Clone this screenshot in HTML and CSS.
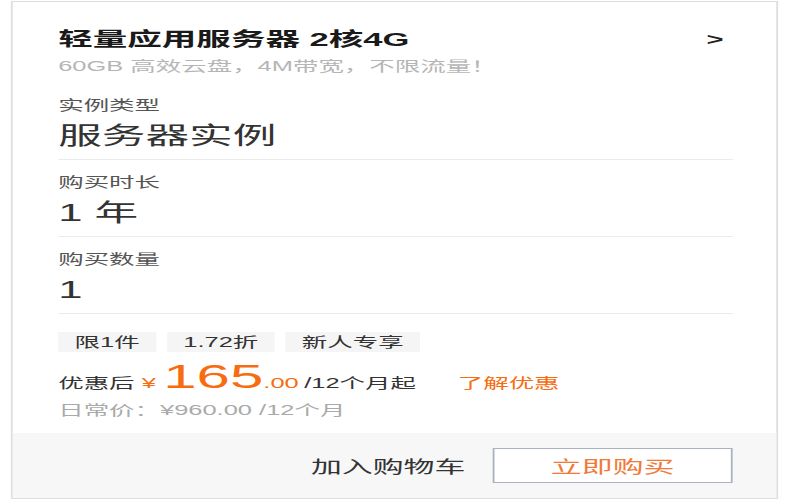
FILE: index.html
```html
<!DOCTYPE html>
<html lang="zh-CN">
<head>
<meta charset="utf-8">
<title>轻量应用服务器</title>
<link rel="stylesheet" href="styles.css">
</head>
<body>
<div class="stage">
  <div class="card">
    <div class="body">
      <div class="head">
        <div class="title-row">
          <h1 class="title">轻量应用服务器 2核4G</h1>
          <span class="arrow">&gt;</span>
        </div>
        <p class="subtitle">60GB 高效云盘，4M带宽，不限流量！</p>
      </div>
      <div class="fields">
        <div class="field">
          <div class="label">实例类型</div>
          <div class="value">服务器实例</div>
        </div>
        <div class="field">
          <div class="label">购买时长</div>
          <div class="value">1 年</div>
        </div>
        <div class="field">
          <div class="label">购买数量</div>
          <div class="value">1</div>
        </div>
      </div>
      <div class="tags">
        <span class="tag">限1件</span>
        <span class="tag">1.72折</span>
        <span class="tag">新人专享</span>
      </div>
      <div class="price">
        <span class="price-label">优惠后</span><span class="yen">¥</span><span class="amount">165</span><span class="cents">.00</span><span class="period">/12个月起</span><span class="learn">了解优惠</span>
      </div>
      <div class="regular">日常价：¥960.00 /12个月</div>
    </div>
    <div class="footer">
      <span class="cart">加入购物车</span>
      <button class="buy">立即购买</button>
    </div>
  </div>
</div>
</body>
</html>
```
FILE: styles.css
```css
* {
  box-sizing: border-box;
  margin: 0;
  padding: 0;
}

body {
  margin: 0;
  background: #ffffff;
  font-family: "Liberation Sans", "Noto Sans CJK SC", sans-serif;
  color: #333333;
}

.stage {
  width: 440px;
  height: 500px;
  padding: 1px 0 0 6px;
  transform: scaleX(1.818);
  transform-origin: 0 0;
}

.card {
  width: 422px;
  height: 498px;
  border: 1px solid #dedede;
  background: #ffffff;
  display: flex;
  flex-direction: column;
}

.body {
  flex: 1;
  padding: 25px 24px 0 25px;
}

.title-row {
  display: flex;
  justify-content: space-between;
  align-items: center;
}

.title {
  font-size: 19px;
  line-height: 26px;
  font-weight: bold;
  color: #1a1a1a;
}

.arrow {
  font-size: 16px;
  font-weight: bold;
  color: #222222;
  margin-right: 5px;
}

.subtitle {
  margin-top: 3px;
  font-size: 14px;
  line-height: 20px;
  color: #b5b5b5;
}

.fields {
  margin-top: 7px;
}

.field {
  padding: 12px 0 8px;
  border-bottom: 1px solid #ebebeb;
}

.label {
  font-size: 14px;
  line-height: 20px;
  color: #555555;
}

.value {
  margin-top: 6px;
  font-size: 24px;
  line-height: 30px;
  color: #333333;
}

.tags {
  display: flex;
  gap: 6px;
  margin-top: 18px;
}

.tag {
  height: 20px;
  line-height: 20px;
  padding: 0 9px;
  background: #f5f5f5;
  font-size: 14px;
  color: #333333;
}

.price {
  margin-top: 7px;
  height: 36px;
  line-height: 36px;
  font-size: 14px;
  color: #333333;
  white-space: nowrap;
}

.yen {
  color: #f86c10;
  margin-left: 4px;
  margin-right: 4px;
}

.amount {
  color: #f86c10;
  font-size: 33px;
}

.cents {
  color: #f86c10;
}

.period {
  margin-left: 3px;
}

.learn {
  margin-left: 23px;
  color: #f86c10;
}

.regular {
  margin-top: 5px;
  font-size: 14px;
  line-height: 20px;
  color: #aaaaaa;
}

.footer {
  height: 65px;
  background: #f7f7f8;
  display: flex;
  justify-content: flex-end;
  align-items: center;
  gap: 15px;
  padding-right: 24px;
}

.cart {
  font-size: 17px;
  color: #333333;
}

.buy {
  width: 132px;
  height: 35px;
  border: 1px solid #aab1bf;
  background: #ffffff;
  color: #f07a3a;
  font-size: 17px;
  font-family: inherit;
}
```
